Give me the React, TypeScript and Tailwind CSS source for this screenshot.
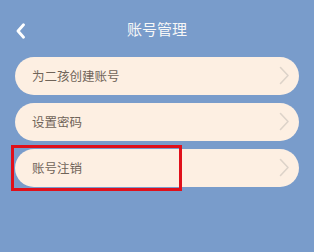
const items = ["为二孩创建账号", "设置密码", "账号注销"];

function ChevronRight() {
  return (
    <svg width="11" height="19" viewBox="0 0 11 19" fill="none" className="shrink-0">
      <path d="M1.5 1.5 L9 9.5 L1.5 17.5" stroke="#ddd3c9" strokeWidth="1.6" strokeLinecap="round" strokeLinejoin="round" />
    </svg>
  );
}

export default function App() {
  return (
    <div
      className="relative w-[314px] h-[252px] bg-[#799ccb] overflow-hidden"
      style={{ fontFamily: '"Noto Sans CJK SC", "Noto Sans", sans-serif' }}
    >
      <div className="relative flex items-center justify-center h-[57px]">
        <svg width="10" height="16" viewBox="0 0 10 16" fill="none" className="absolute left-[16px] top-[23px]">
          <path d="M7.5 1.8 L2 8 L7.5 14.2" stroke="#ffffff" strokeWidth="2.8" strokeLinecap="round" strokeLinejoin="round" />
        </svg>
        <span className="text-[15px] text-[#f7f7f7] leading-none -mt-[1px]">账号管理</span>
      </div>

      <div className="flex flex-col gap-[8.5px] px-[15px]">
        {items.map((t) => (
          <div
            key={t}
            className="h-[37.5px] rounded-full bg-[#fdefe2] flex items-center justify-between pl-[17px] pr-[9px]"
          >
            <span className="text-[12.5px] text-[#706459] leading-none">{t}</span>
            <ChevronRight />
          </div>
        ))}
      </div>

      <div className="absolute left-[11px] top-[145px] w-[171px] h-[46px] border-[3px] border-[#e0101a]" />
    </div>
  );
}
